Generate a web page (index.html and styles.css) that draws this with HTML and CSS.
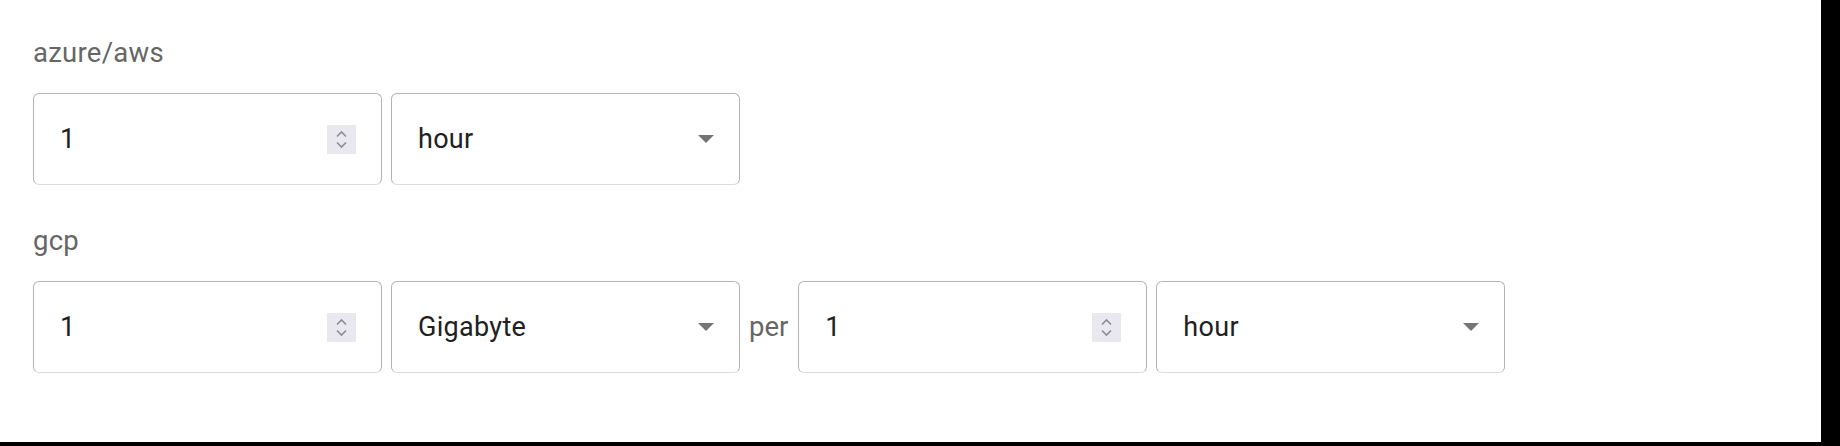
FILE: index.html
```html
<!DOCTYPE html>
<html lang="en">
<head>
<meta charset="utf-8">
<title>Rates</title>
<link rel="stylesheet" href="styles.css">
</head>
<body>
<div class="page">
  <section class="group">
    <div class="label">azure/aws</div>
    <div class="fields">
      <div class="field num">
        <span class="value">1</span>
        <span class="spin"><svg width="29" height="29" viewBox="0 0 29 29"><path d="M10 11.5 L14.5 7 L19 11.5" /><path d="M10 17.5 L14.5 22 L19 17.5" /></svg></span>
      </div>
      <div class="field select">
        <span class="value">hour</span>
        <svg class="caret" width="16" height="8" viewBox="0 0 16 8"><polygon points="0,0 16,0 8,8" /></svg>
      </div>
    </div>
  </section>
  <section class="group">
    <div class="label">gcp</div>
    <div class="fields">
      <div class="field num">
        <span class="value">1</span>
        <span class="spin"><svg width="29" height="29" viewBox="0 0 29 29"><path d="M10 11.5 L14.5 7 L19 11.5" /><path d="M10 17.5 L14.5 22 L19 17.5" /></svg></span>
      </div>
      <div class="field select">
        <span class="value">Gigabyte</span>
        <svg class="caret" width="16" height="8" viewBox="0 0 16 8"><polygon points="0,0 16,0 8,8" /></svg>
      </div>
      <span class="per">per</span>
      <div class="field num">
        <span class="value">1</span>
        <span class="spin"><svg width="29" height="29" viewBox="0 0 29 29"><path d="M10 11.5 L14.5 7 L19 11.5" /><path d="M10 17.5 L14.5 22 L19 17.5" /></svg></span>
      </div>
      <div class="field select">
        <span class="value">hour</span>
        <svg class="caret" width="16" height="8" viewBox="0 0 16 8"><polygon points="0,0 16,0 8,8" /></svg>
      </div>
    </div>
  </section>
</div>
</body>
</html>
```
FILE: styles.css
```css
html {
  background: #000;
}
body {
  margin: 0;
}
.page {
  width: 1821px;
  height: 442px;
  box-sizing: border-box;
  background: #fff;
  padding: 37px 0 0 33px;
  font-family: Roboto, "Liberation Sans", sans-serif;
}
.group + .group {
  margin-top: 40px;
}
.label {
  font-size: 27.5px;
  line-height: 32px;
  color: #666;
  letter-spacing: 0.25px;
}
.fields {
  display: flex;
  align-items: center;
  gap: 9px;
  margin-top: 24px;
}
.field {
  width: 349px;
  height: 92px;
  box-sizing: border-box;
  border: 1px solid #b4b4b4;
  border-bottom-color: #dcdcdc;
  border-radius: 6px;
  display: flex;
  align-items: center;
  padding: 0 25px 0 26px;
}
.num {
  padding-right: 25px;
}
.value {
  flex: 1;
  font-size: 27px;
  line-height: 32px;
  color: #212121;
  letter-spacing: 0.3px;
}
.spin {
  display: block;
  width: 29px;
  height: 29px;
  background: #e9e8ee;
}
.spin svg {
  display: block;
}
.spin path {
  fill: none;
  stroke: #8d8c99;
  stroke-width: 1.6;
}
.caret {
  display: block;
}
.caret polygon {
  fill: #757575;
}
.per {
  font-size: 27.5px;
  line-height: 32px;
  color: #666;
  margin-right: 1px;
}
```
